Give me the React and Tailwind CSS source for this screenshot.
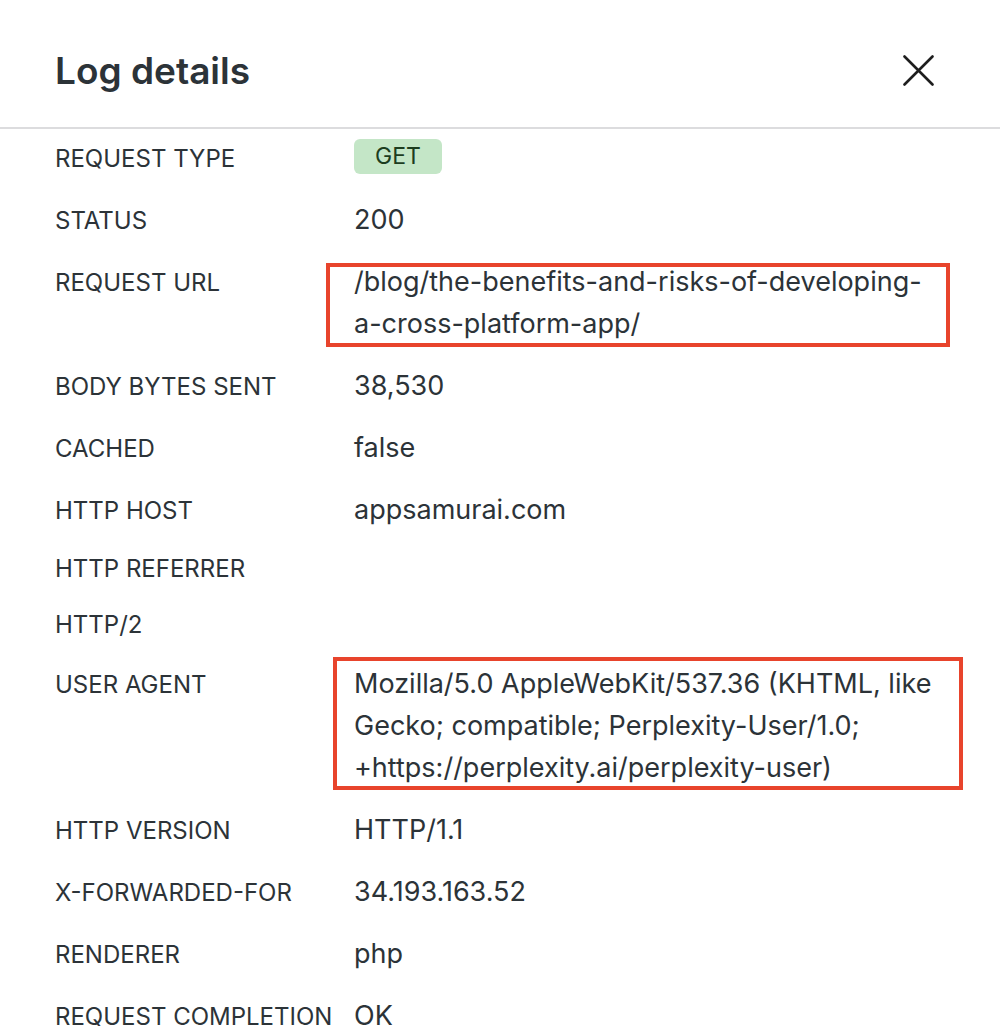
import React from 'react'

const ROWS = [
  { label: 'Request type', badge: 'GET' },
  { label: 'Status', value: '200' },
  { label: 'Request URL', value: '/blog/the-benefits-and-risks-of-developing-a-cross-platform-app/', mark: 'url' },
  { label: 'Body bytes sent', value: '38,530' },
  { label: 'Cached', value: 'false' },
  { label: 'HTTP host', value: 'appsamurai.com' },
  { label: 'HTTP referrer' },
  { label: 'HTTP/2' },
  {
    label: 'User agent',
    value: 'Mozilla/5.0 AppleWebKit/537.36 (KHTML, like Gecko; compatible; Perplexity-User/1.0; +https://perplexity.ai/perplexity-user)',
    mark: 'ua',
  },
  { label: 'HTTP version', value: 'HTTP/1.1' },
  { label: 'X-Forwarded-For', value: '34.193.163.52' },
  { label: 'Renderer', value: 'php' },
  { label: 'Request completion', value: 'OK' },
]

function Value({ row }) {
  if (row.badge) {
    return (
      <div className="text-[27px] leading-[42px]">
        <span className="inline-block rounded-md bg-[#c4e6c7] px-[21px] align-[3px] text-[23px] leading-[35px] text-[#1c3d1f]">
          {row.badge}
        </span>
      </div>
    )
  }
  if (!row.value) return null
  return (
    <div className="relative break-words text-[27px] leading-[42px]">
      {row.value}
      {/* red highlight boxes from the screenshot */}
      {row.mark === 'url' && (
        <div className="pointer-events-none absolute -left-[28px] top-[2px] -right-[5px] -bottom-[2px] border-4 border-[#e8442c]" />
      )}
      {row.mark === 'ua' && (
        <div className="pointer-events-none absolute -left-[21px] -top-[6px] -right-[18px] -bottom-[1px] border-4 border-[#e8442c]" />
      )}
    </div>
  )
}

export default function App() {
  return (
    <div className="min-h-screen bg-white text-[#2c3338]" style={{ fontFamily: 'Inter, "Noto Sans", sans-serif' }}>
      <header className="flex h-[129px] items-center justify-between border-b-2 border-[#dcdcde] pl-[55px] pr-[66px] pt-[14px]">
        <h1 className="text-[37px] font-semibold leading-none">Log details</h1>
        <button className="text-[#1e1e1e]" aria-label="Close">
          <svg width="31" height="31" viewBox="0 0 31 31" fill="none" stroke="currentColor" strokeWidth="2.6" strokeLinecap="round">
            <path d="M1.5 1.5 29.5 29.5M29.5 1.5 1.5 29.5" />
          </svg>
        </button>
      </header>

      <div className="flex flex-col gap-[20px] px-[55px] pt-[8px] pb-10">
        {ROWS.map((row) => (
          <div key={row.label} className="grid grid-cols-[299px_1fr] items-baseline">
            <div className="text-[24px] uppercase leading-[36px]">{row.label}</div>
            <div className="min-w-0">
              <Value row={row} />
            </div>
          </div>
        ))}
      </div>
    </div>
  )
}
